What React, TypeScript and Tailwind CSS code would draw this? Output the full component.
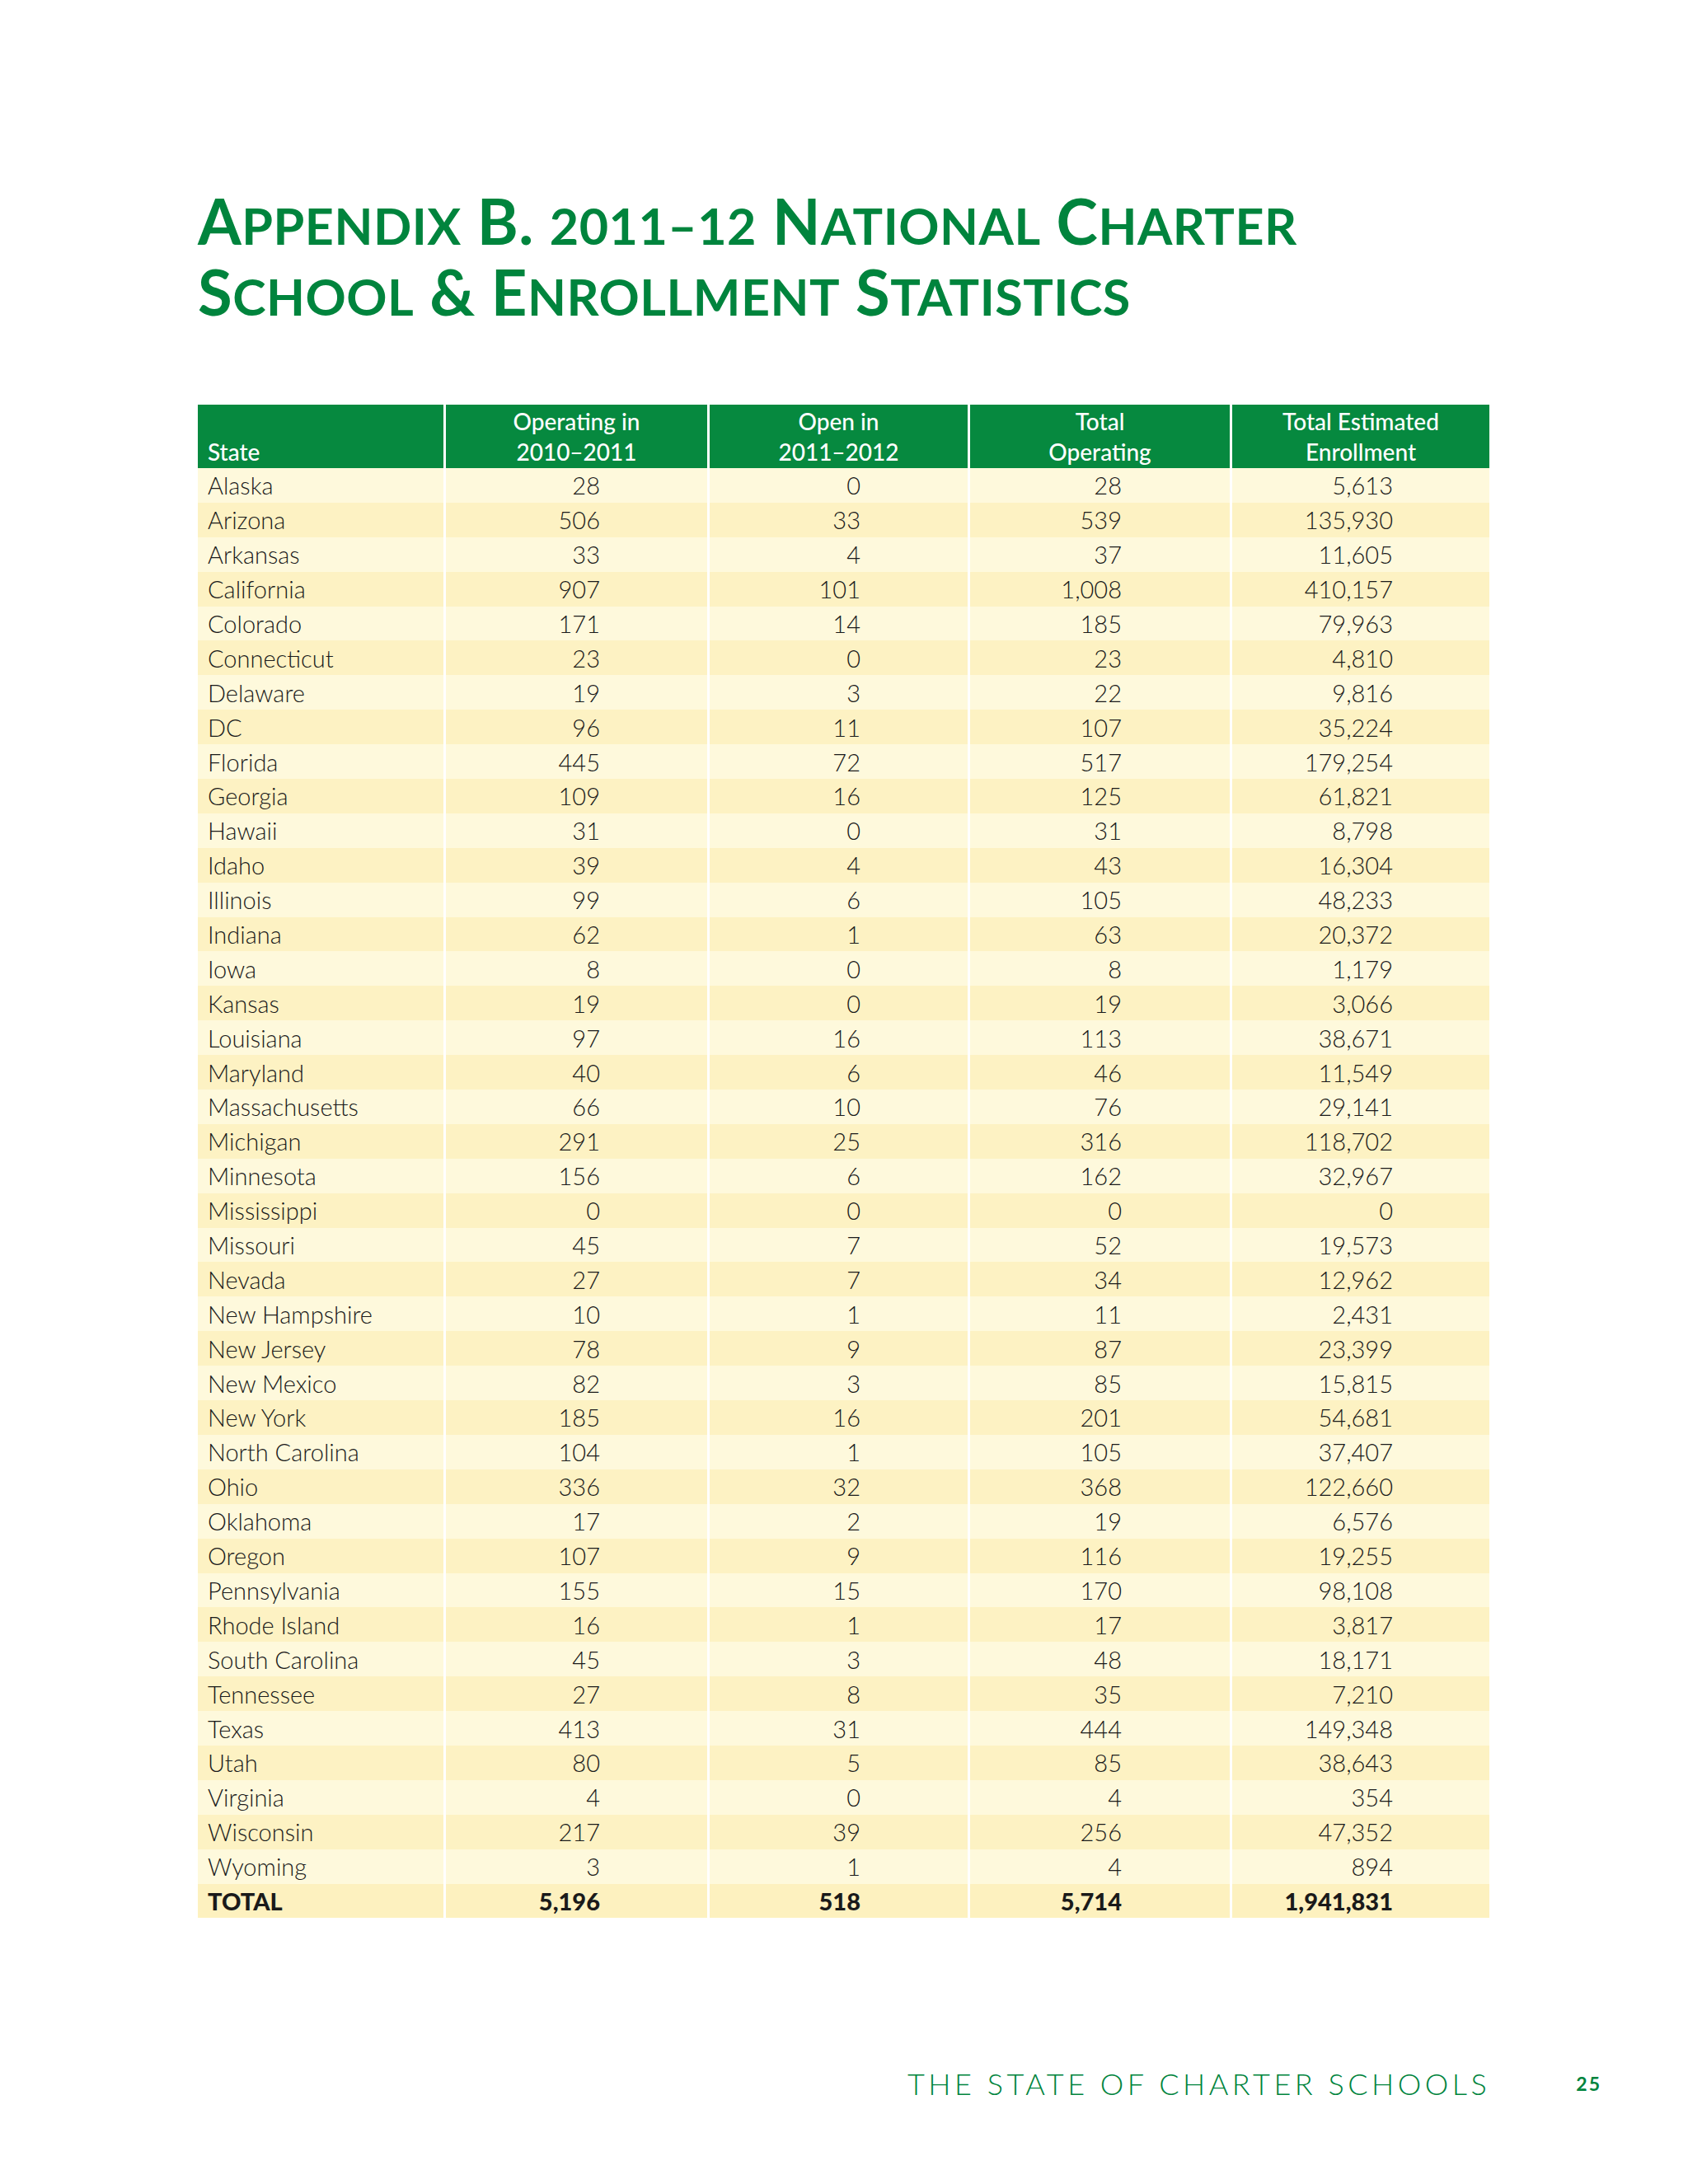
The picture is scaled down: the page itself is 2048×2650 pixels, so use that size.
type Row = [string, string, string, string, string];

const rows: Row[] = [
  ["Alaska", "28", "0", "28", "5,613"],
  ["Arizona", "506", "33", "539", "135,930"],
  ["Arkansas", "33", "4", "37", "11,605"],
  ["California", "907", "101", "1,008", "410,157"],
  ["Colorado", "171", "14", "185", "79,963"],
  ["Connecticut", "23", "0", "23", "4,810"],
  ["Delaware", "19", "3", "22", "9,816"],
  ["DC", "96", "11", "107", "35,224"],
  ["Florida", "445", "72", "517", "179,254"],
  ["Georgia", "109", "16", "125", "61,821"],
  ["Hawaii", "31", "0", "31", "8,798"],
  ["Idaho", "39", "4", "43", "16,304"],
  ["Illinois", "99", "6", "105", "48,233"],
  ["Indiana", "62", "1", "63", "20,372"],
  ["Iowa", "8", "0", "8", "1,179"],
  ["Kansas", "19", "0", "19", "3,066"],
  ["Louisiana", "97", "16", "113", "38,671"],
  ["Maryland", "40", "6", "46", "11,549"],
  ["Massachusetts", "66", "10", "76", "29,141"],
  ["Michigan", "291", "25", "316", "118,702"],
  ["Minnesota", "156", "6", "162", "32,967"],
  ["Mississippi", "0", "0", "0", "0"],
  ["Missouri", "45", "7", "52", "19,573"],
  ["Nevada", "27", "7", "34", "12,962"],
  ["New Hampshire", "10", "1", "11", "2,431"],
  ["New Jersey", "78", "9", "87", "23,399"],
  ["New Mexico", "82", "3", "85", "15,815"],
  ["New York", "185", "16", "201", "54,681"],
  ["North Carolina", "104", "1", "105", "37,407"],
  ["Ohio", "336", "32", "368", "122,660"],
  ["Oklahoma", "17", "2", "19", "6,576"],
  ["Oregon", "107", "9", "116", "19,255"],
  ["Pennsylvania", "155", "15", "170", "98,108"],
  ["Rhode Island", "16", "1", "17", "3,817"],
  ["South Carolina", "45", "3", "48", "18,171"],
  ["Tennessee", "27", "8", "35", "7,210"],
  ["Texas", "413", "31", "444", "149,348"],
  ["Utah", "80", "5", "85", "38,643"],
  ["Virginia", "4", "0", "4", "354"],
  ["Wisconsin", "217", "39", "256", "47,352"],
  ["Wyoming", "3", "1", "4", "894"],
];

const total: Row = ["TOTAL", "5,196", "518", "5,714", "1,941,831"];

const cols = "grid grid-cols-[298px_317px_313px_315px_312px] gap-x-[3px]";

// small caps done by hand: big initial + smaller uppercased rest
const Sc = ({ big, rest }: { big: string; rest?: string }) => (
  <>
    <span className="leading-none">{big}</span>
    {rest && <span className="text-[61px] leading-none uppercase">{rest}</span>}
  </>
);

const DataRow = ({ row, shade, bold }: { row: Row; shade: string; bold?: boolean }) => (
  <div className={`${cols} h-[41.9px] items-center text-[29px] leading-none text-[#1a1a1a] ${bold ? "font-black" : "font-light"}`}>
    <div className={`${shade} h-full flex items-center pl-3`}>{row[0]}</div>
    <div className={`${shade} h-full flex items-center justify-end pr-[130px]`}>{row[1]}</div>
    <div className={`${shade} h-full flex items-center justify-end pr-[130px]`}>{row[2]}</div>
    <div className={`${shade} h-full flex items-center justify-end pr-[131px]`}>{row[3]}</div>
    <div className={`${shade} h-full flex items-center justify-end pr-[117px]`}>{row[4]}</div>
  </div>
);

export default function App() {
  return (
    <div className="w-[2048px] h-[2650px] bg-white font-['Lato',sans-serif] pl-[240px] pt-[225px]">
      <h1 className="font-bold text-[#00843d] text-[76px] leading-[86px] tracking-[0.5px]">
        <div className="h-[86px] whitespace-nowrap">
          <Sc big="A" rest="ppendix" /> <Sc big="B." />{" "}
          <span className="text-[61px] leading-none">2011–12</span> <Sc big="N" rest="ational" />{" "}
          <Sc big="C" rest="harter" />
        </div>
        <div className="h-[86px] whitespace-nowrap">
          <Sc big="S" rest="chool" /> <Sc big="&" /> <Sc big="E" rest="nrollment" />{" "}
          <Sc big="S" rest="tatistics" />
        </div>
      </h1>

      <div className="mt-[94px] w-[1567px]">
        <div className={`${cols} h-[77px] text-white text-[28px] font-medium leading-[37px]`}>
          <div className="bg-[#06893f] flex items-end pl-3 pb-[1px]">State</div>
          <div className="bg-[#06893f] flex flex-col items-center justify-end pb-[1px]">
            <span>Operating in</span>
            <span>2010–2011</span>
          </div>
          <div className="bg-[#06893f] flex flex-col items-center justify-end pb-[1px]">
            <span>Open in</span>
            <span>2011–2012</span>
          </div>
          <div className="bg-[#06893f] flex flex-col items-center justify-end pb-[1px]">
            <span>Total</span>
            <span>Operating</span>
          </div>
          <div className="bg-[#06893f] flex flex-col items-center justify-end pb-[1px]">
            <span>Total Estimated</span>
            <span>Enrollment</span>
          </div>
        </div>
        {rows.map((r, i) => (
          <DataRow key={r[0]} row={r} shade={i % 2 === 0 ? "bg-[#fef9dc]" : "bg-[#fdf2c3]"} />
        ))}
        <DataRow row={total} shade="bg-[#fdf1bf]" bold />
      </div>

      <div className="mt-[183px] w-[1703px] flex items-center justify-between text-[#00843d]">
        <span className="ml-[861px] text-[36px] leading-[36px] font-light tracking-[4.5px]">
          THE STATE OF CHARTER SCHOOLS
        </span>
        <span className="text-[23px] font-bold tracking-[2px]">25</span>
      </div>
    </div>
  );
}
